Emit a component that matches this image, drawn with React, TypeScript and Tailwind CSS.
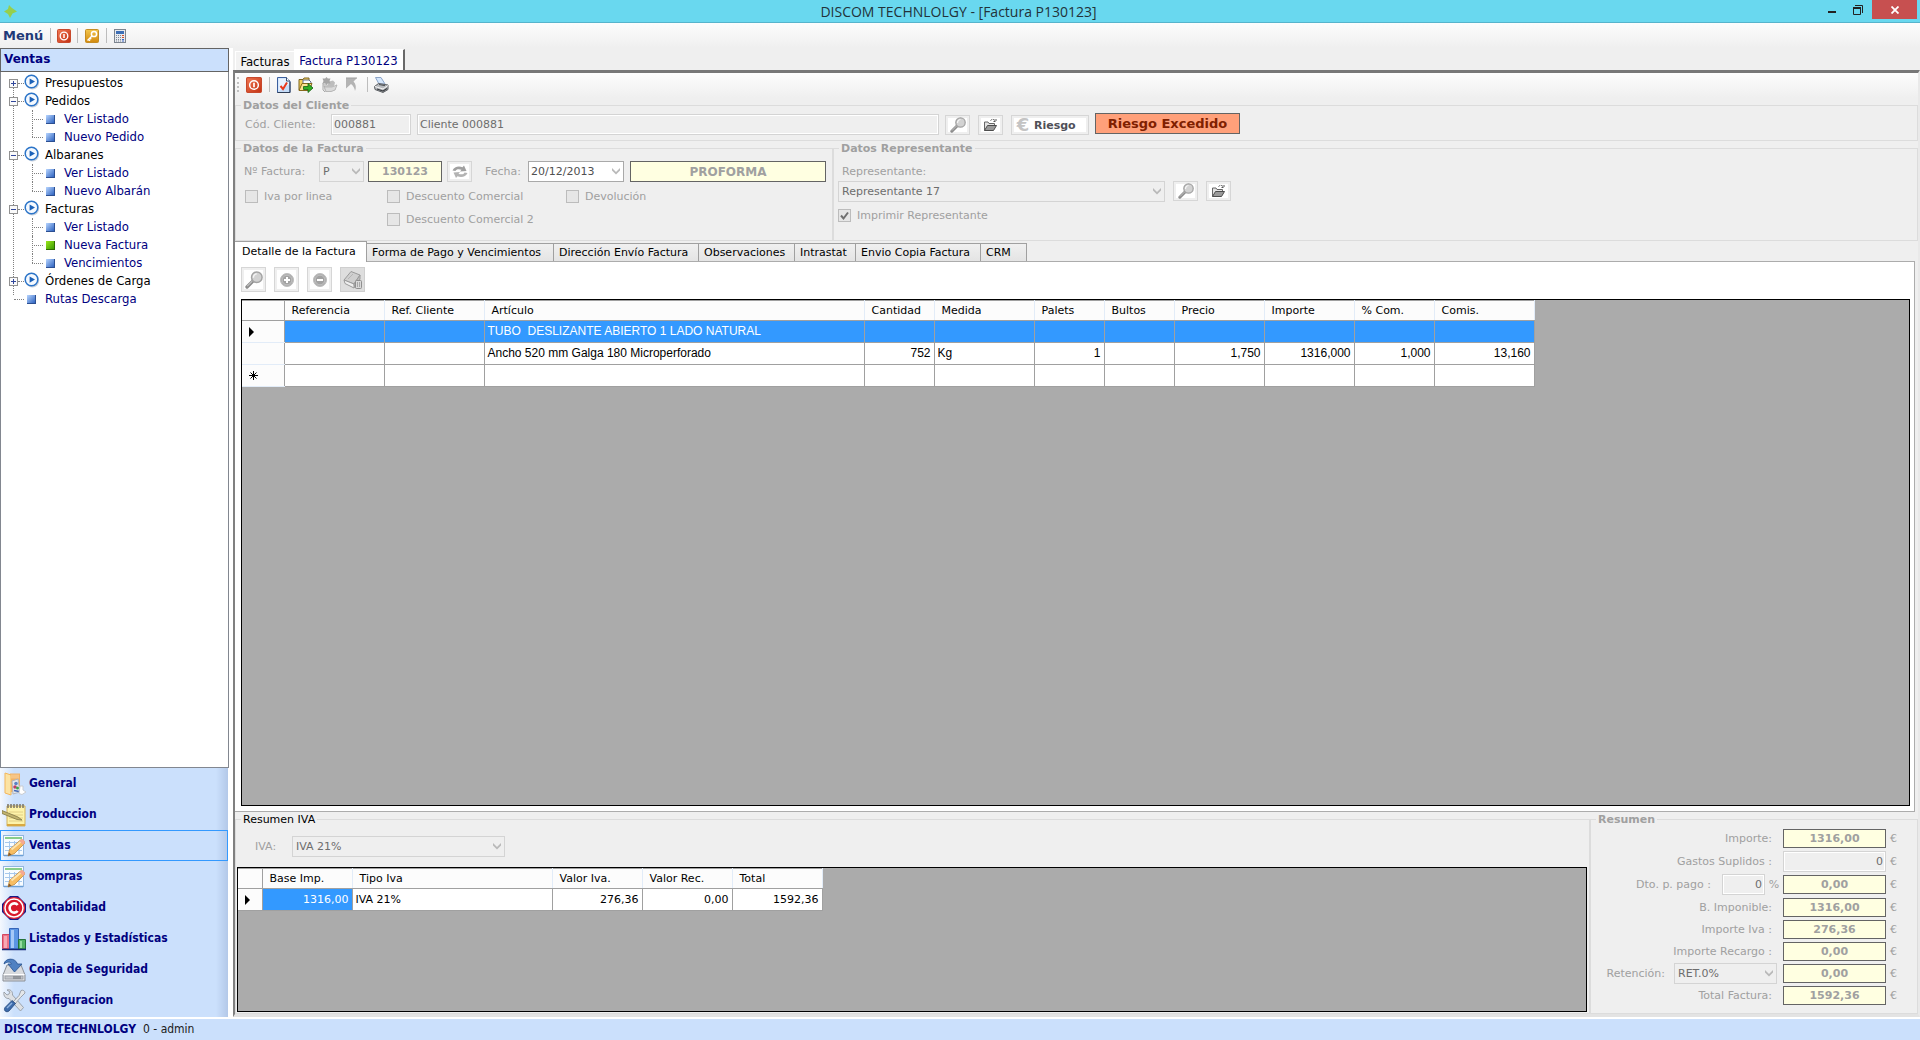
import React from "react";

/* ---------- icons ---------- */

function PowerIcon({ size = 14 }: { size?: number }) {
  return (
    <svg width={size} height={size} viewBox="0 0 14 14" aria-hidden="true">
      <defs>
        <linearGradient id="power" x1="0" y1="0" x2="1" y2="1">
          <stop offset="0" stopColor="#f27a55" />
          <stop offset="1" stopColor="#c22f10" />
        </linearGradient>
      </defs>
      <rect x="0.5" y="0.5" width="13" height="13" rx="1" fill="url(#power)" stroke="#c8492c" />
      <circle cx="7" cy="7" r="3.8" fill="none" stroke="#fff" strokeWidth="1.3" />
      <path d="M7 5v4" stroke="#fff" strokeWidth="1.5" />
    </svg>
  );
}

function KeyIcon() {
  return (
    <svg width="14" height="14" viewBox="0 0 14 14" aria-hidden="true">
      <defs>
        <linearGradient id="key" x1="0" y1="0" x2="0" y2="1">
          <stop offset="0" stopColor="#f3c64d" />
          <stop offset="1" stopColor="#d2890c" />
        </linearGradient>
      </defs>
      <rect x="0.5" y="0.5" width="13" height="13" rx="1" fill="url(#key)" stroke="#c58c22" />
      <circle cx="9" cy="5" r="2.6" fill="none" stroke="#fff" strokeWidth="1.5" />
      <path d="M7.2 6.8L2.5 11.5M3.5 10.5l1.5 1.3M5 9l1.2 1.2" stroke="#fff" strokeWidth="1.4" />
    </svg>
  );
}

function CalculatorIcon() {
  return (
    <svg width="12" height="14" viewBox="0 0 12 14" aria-hidden="true">
      <rect x="0.5" y="0.5" width="11" height="13" fill="#e9ebee" stroke="#7d858f" />
      <rect x="2" y="2" width="8" height="3" fill="#3f6fb5" />
      <path d="M2 6.5h5M2 8.5h5M2 10.5h5M2 12h5" stroke="#7c8797" strokeDasharray="1 1" />
      <path d="M8 6.5h2M8 8.5h2" stroke="#d4502e" />
      <path d="M8 10.5h2M8 12h2" stroke="#3a65c4" />
    </svg>
  );
}

function PlayIcon() {
  return (
    <svg width="16" height="16" viewBox="0 0 16 16" aria-hidden="true">
      <circle cx="8.4" cy="8.6" r="6.8" fill="#c9d2dd" />
      <circle cx="7.5" cy="7.5" r="6.3" fill="#f4f9ff" stroke="#2b74c8" strokeWidth="1.5" />
      <path d="M5.6 4.4L11 7.5l-5.4 3.2z" fill="#1b61b8" />
    </svg>
  );
}

function NodeIcon({ green }: { green?: boolean }) {
  return (
    <svg width="9" height="9" viewBox="0 0 9 9" aria-hidden="true">
      <defs>
        <linearGradient id="nodeBlue" x1="0" y1="0" x2="1" y2="1">
          <stop offset="0" stopColor="#b9d6ff" />
          <stop offset="1" stopColor="#1d55b8" />
        </linearGradient>
        <linearGradient id="nodeGreen" x1="0" y1="0" x2="1" y2="1">
          <stop offset="0" stopColor="#9be61a" />
          <stop offset="1" stopColor="#2f9400" />
        </linearGradient>
      </defs>
      <rect width="9" height="9" fill={green ? "url(#nodeGreen)" : "url(#nodeBlue)"} />
      <path d="M0 8.5h9M8.5 0v9" stroke={green ? "#2f6b00" : "#2c4f91"} />
    </svg>
  );
}

function CheckPageIcon() {
  return (
    <svg width="14" height="16" viewBox="0 0 14 16" aria-hidden="true">
      <path d="M0.5 0.5h9L13 4v11.5H0.5z" fill="#c5ddf9" stroke="#3b5f9e" />
      <path d="M1.5 1.5h7.5v3h3v3L1.5 14z" fill="#e6f1ff" />
      <path d="M9.5 0.5V4H13" fill="#fff" stroke="#3b4f6e" />
      <path d="M0.5 15.5H13V5" fill="none" stroke="#2f3d55" />
      <path d="M3.5 9l2.5 3 4-6.500" fill="none" stroke="#e8391c" strokeWidth="2" />
    </svg>
  );
}

function ExportFolderIcon() {
  return (
    <svg width="16" height="16" viewBox="0 0 16 16" aria-hidden="true">
      <path d="M1 2.500h4l1-1.500h5v3h-2l-5 9H1z" fill="#f3cf5c" stroke="#7d6420" />
      <path d="M5 3h6l2 2v5H5z" fill="#f8fbff" stroke="#66708a" />
      <path d="M1 13.500l3-7h10l-3 7z" fill="#fbe391" stroke="#86691d" />
      <path d="M5.500 9.500h4.500V6.500l5 4.500-5 4.500v-3H5.500z" fill="#2fae23" stroke="#145f12" strokeWidth="0.8" />
    </svg>
  );
}

function GrayFolderIcon() {
  return (
    <svg width="17" height="16" viewBox="0 0 17 16" aria-hidden="true">
      <path d="M2 7h4l1 1.500h6v2L16 7l-1.500 6L10 15H4z" fill="#cacaca" />
      <path d="M3 9l2 5.500h5l4-1.500 2-5-5 2H4z" fill="#dadada" stroke="#ababab" strokeWidth="0.7" />
      <path d="M2 6v7l2 2" fill="none" stroke="#a8a8a8" />
      <path d="M8 4.500l4-1 2 2-1 4H6z" fill="#bdbdbd" />
      <path d="M5.500 0l1.300 1.600L9.500 1.500 8.500 4l1 2.500-2.700-.1L5.500 8 4.200 6.400 1.500 6.500l1-2.500-1-2.500 2.700.1z" fill="#a6a6a6" />
    </svg>
  );
}

function GrayArrowIcon() {
  return (
    <svg width="13" height="15" viewBox="0 0 13 15" aria-hidden="true">
      <path d="M1 1h11L8.500 4.500c2.500 2.500 3 6 1.500 9.500C9.500 11 8.500 9 6 7L1 11.500z" fill="#b4b4b4" />
      <path d="M1 1h11" stroke="#9f9f9f" />
    </svg>
  );
}

function PrinterIcon() {
  return (
    <svg width="15" height="16" viewBox="0 0 15 16" aria-hidden="true">
      <path d="M1.500 0.500h5.500L11 7H5z" fill="#d4e6fb" stroke="#8ba3c6" />
      <path d="M0.500 9.500l4-3 9.500 1.500v4.500L9 15.500l-8-3z" fill="#b7babe" stroke="#5c5f63" />
      <path d="M1 9.500l8 2.500 5-3.500" fill="none" stroke="#f4f4f4" />
      <path d="M3 12l6 2 4-2.500" fill="none" stroke="#3a3d41" strokeWidth="1.3" />
      <path d="M5 7.500l6 1.200" stroke="#4c4f53" />
    </svg>
  );
}

function MagnifierIcon({ size = 16 }: { size?: number }) {
  return (
    <svg width={size} height={size} viewBox="0 0 16 16" aria-hidden="true">
      <path d="M1.800 14.200L7 9" stroke="#8c8c8c" strokeWidth="3" strokeLinecap="round" />
      <path d="M2 13.500L6.500 9" stroke="#c4c4c4" />
      <circle cx="10.500" cy="5.500" r="4.700" fill="#d2d2d2" stroke="#a3a3a3" strokeWidth="1.300" />
      <path d="M7.500 6a3.200 3.200 0 0 1 3-3.500" fill="none" stroke="#f5f5f5" strokeWidth="1.200" />
    </svg>
  );
}

function OpenFolderIcon() {
  return (
    <svg width="15" height="14" viewBox="0 0 15 14" aria-hidden="true">
      <path d="M1.500 12.500V4h3.500l1 1.500h5.500V7" fill="#e2e2e2" stroke="#666" />
      <path d="M1.500 12.500L4.500 7.500h9l-3 5z" fill="#999" stroke="#4c4c4c" />
      <path d="M7.500 2.500c1.500-1.500 3-1.500 4.500 0M10.500 3.500h2.500V1" fill="none" stroke="#555" strokeDasharray="2 1" />
    </svg>
  );
}

function CircleSignIcon({ plus }: { plus?: boolean }) {
  return (
    <svg width="16" height="16" viewBox="0 0 16 16" aria-hidden="true">
      <circle cx="8" cy="8" r="6.500" fill="#adadad" stroke="#bdbdbd" />
      <circle cx="8" cy="8" r="4.800" fill="#a2a2a2" stroke="#cacaca" strokeWidth="0.7" />
      <path d={plus ? "M5 8h6M8 5v6" : "M5 8h6"} stroke="#fff" strokeWidth="2" />
    </svg>
  );
}

function BookIcon() {
  return (
    <svg width="20" height="20" viewBox="0 0 20 20" aria-hidden="true">
      <path d="M1 10L8 1.500l9 3.500-6 9z" fill="#cfcfcf" stroke="#9a9a9a" />
      <path d="M1 10l10 4v4L2 13.500z" fill="#efefef" stroke="#9a9a9a" />
      <path d="M11 14l6-9v4l-5 9z" fill="#bdbdbd" stroke="#9a9a9a" />
      <path d="M5 9l5-5" stroke="#b5b5b5" />
      <rect x="12.500" y="10.500" width="6" height="8" rx="1" fill="#d9d9d9" stroke="#8f8f8f" />
      <path d="M14.500 12v5M16.500 12v5" stroke="#a8a8a8" />
    </svg>
  );
}

function RefreshIcon() {
  return (
    <svg width="18" height="16" viewBox="0 0 18 16" aria-hidden="true">
      <path d="M1.500 6.500C3 2.500 8 1.500 11.500 3.200L13 1.500l2.500 5.500-6.500.5 1.500-1.800C8 4.700 5 5 4.500 7z" fill="#a0a0a0" />
      <path d="M16.500 9c-1.500 4-6.500 5-10 3.300L5 14 2.500 8.500 9 8 7.500 9.800c2.500 1 5.500.7 6-1.300z" fill="#b3b3b3" />
    </svg>
  );
}

function ChevronIcon() {
  return (
    <svg width="8" height="7" viewBox="0 0 8 7" aria-hidden="true">
      <path d="M0 0l4 4 4-4v2.500L4 6.500 0 2.500z" fill="#b9b9b9" />
    </svg>
  );
}

/* ---------- module icons of the navigation bar ---------- */

function GeneralIcon() {
  return (
    <svg width="24" height="24" viewBox="0 0 24 24" aria-hidden="true">
      <path d="M8 1.500h10V20H8z" fill="#f0b268" />
      <path d="M3 1l6 2v20l-6-2z" fill="#fce3a4" stroke="#f3b75c" />
      <path d="M9 2.500h8v4H9z" fill="#f7c586" />
      <path d="M10 9l6-2 2 13-7 2z" fill="#e6e9ee" stroke="#b0b5be" />
      <circle cx="14" cy="11.500" r="1.800" fill="#5b82c4" />
      <circle cx="13" cy="15" r="1.800" fill="#bc3f68" />
      <circle cx="15.500" cy="16" r="1.500" fill="#3ba44a" />
      <path d="M12 18.500l5 1" stroke="#3f66b5" strokeWidth="1.500" />
      <path d="M18 14h3v4l3 2-4 2.500-3-1z" fill="#fff" stroke="#c9ccd1" />
    </svg>
  );
}

function NotepadIcon() {
  return (
    <svg width="24" height="24" viewBox="0 0 24 24" aria-hidden="true">
      <path d="M5 3h18v20H5z" fill="#fdf3a9" stroke="#d3b25d" />
      <path d="M7 9h14M7 12h14M7 15h14M7 18h14" stroke="#e2cf85" />
      <path d="M5 21h18v2H5z" fill="#d9a941" />
      <path d="M6 1v4M9 1v4M12 1v4M15 1v4M18 1v4M21 1v4" stroke="#7a7464" strokeWidth="1.500" />
      <path d="M0 7.500l16 6.500 4 3-5-.5L0 10.500z" fill="#c1b36e" stroke="#827745" strokeWidth="0.800" />
    </svg>
  );
}

function SheetPencilIcon() {
  return (
    <svg width="24" height="24" viewBox="0 0 24 24" aria-hidden="true">
      <rect x="1.500" y="1.500" width="20" height="20" fill="#f8fcff" stroke="#91b6de" />
      <path d="M3 4h17" stroke="#89cd8b" strokeWidth="2" />
      <path d="M3 8.500h17M3 12.500h17M3 16.500h17M7.500 7v13M12.500 7v13M17 7v13" stroke="#a7c8ec" />
      <path d="M2 21.500h19" stroke="#6b9fd6" strokeWidth="1.500" />
      <path d="M6 22l1.500-6.500L18.500 6c2-1 4.500 1 4 3.500L12.500 19.500z" fill="#f7bd62" stroke="#c18a3e" strokeWidth="0.800" />
      <path d="M9.500 15.500L19 7.500" stroke="#fde4ad" strokeWidth="2" />
      <path d="M17.500 7l1.500-1.300c2-1 4.500 1.500 3.500 3.500L21 11z" fill="#f5a893" />
      <path d="M6 22l1-3.500 2.500 2.200z" fill="#7c5732" />
    </svg>
  );
}

function CopyrightIcon() {
  return (
    <svg width="24" height="24" viewBox="0 0 24 24" aria-hidden="true">
      <path d="M8 0h8l8 8v8l-8 8H8l-8-8V8z" fill="#1a1a86" />
      <circle cx="12" cy="12" r="11" fill="#e32636" />
      <circle cx="12" cy="12" r="9" fill="#d8192b" stroke="#fff" strokeWidth="1.500" />
      <path d="M15.700 9a4.600 4.600 0 1 0 0 6" fill="none" stroke="#fff" strokeWidth="2.600" />
    </svg>
  );
}

function BarsIcon() {
  return (
    <svg width="24" height="24" viewBox="0 0 24 24" aria-hidden="true">
      <path d="M0.500 7.500h7v14h-7z" fill="#ee7386" stroke="#d34860" />
      <path d="M2 9h3v12H2z" fill="#f7a9b4" />
      <path d="M7.500 1.500h9V22h-9z" fill="#5b95e4" stroke="#3564b8" />
      <path d="M9 3h3v18H9z" fill="#a5c8f7" />
      <path d="M16.500 12.500h7V22h-7z" fill="#52b266" stroke="#24733a" />
      <path d="M18 14h2v7h-2z" fill="#93da9f" />
      <path d="M0 22.500h24" stroke="#172a78" strokeWidth="1.500" />
    </svg>
  );
}

function BackupIcon() {
  return (
    <svg width="24" height="24" viewBox="0 0 24 24" aria-hidden="true">
      <path d="M5 7h14l4 10v6H1v-6z" fill="#d9dbde" stroke="#8b8f96" />
      <path d="M1.500 16.500h21" stroke="#fff" />
      <path d="M3 18h18v3H3z" fill="#c1c4c9" stroke="#8d9197" strokeWidth="0.600" />
      <path d="M12 18v3M14 18v3M16 18v3M18 18v3" stroke="#6b6f75" />
      <path d="M2 6C3 0 13-1 15.500 6H20l-7.500 8L6 6h3.500C8.500 3.500 5 3.500 2 6z" fill="#4f81c2" stroke="#27528f" strokeWidth="0.800" />
    </svg>
  );
}

function ToolsIcon() {
  return (
    <svg width="24" height="24" viewBox="0 0 24 24" aria-hidden="true">
      <path d="M2 3l3 3 2-1 1-2-3-2c3-1 6 1 5.500 5l11 12.500-3 3.500L7 9.500C4 10 1 7 2 3z" fill="#dde0e4" stroke="#8d939b" strokeWidth="0.800" />
      <path d="M23 4c0-2-2-3.500-4-2.500l-2 5L11 13l2 2 5.500-6.500z" fill="#e4e7ea" stroke="#8c9198" strokeWidth="0.800" />
      <path d="M3 18.500l7-7 3.500 3L7 22c-2.500 2-6-.5-4-3.500z" fill="#3d6bab" stroke="#234577" strokeWidth="0.800" />
      <path d="M5 19l5-5" stroke="#8fb3e0" strokeWidth="1.500" />
    </svg>
  );
}

/* ---------- shared controls ---------- */

function ToolButton({ label, tall, children }: { label: string; tall?: boolean; children: React.ReactNode }) {
  return (
    <button
      type="button"
      aria-label={label}
      className={
        "flex items-center justify-center border border-[#d6d6d6] bg-white shadow-[inset_0_0_0_2px_#efefef] " +
        (tall ? "h-[25px] w-[25px]" : "h-[20px] w-[25px]")
      }
    >
      {children}
    </button>
  );
}

function Drop({ id, label, value, className }: { id: string; label?: string; value: string; className: string }) {
  return (
    <span className={"relative block h-[21px] " + className}>
      <select
        id={id}
        aria-label={label}
        disabled
        className="h-full w-full appearance-none border border-[#d4d4d4] bg-[#efefef] pl-[3px] text-[#6d6d6d] opacity-100"
      >
        <option>{value}</option>
      </select>
      <span className="pointer-events-none absolute top-[7px] right-1">
        <ChevronIcon />
      </span>
    </span>
  );
}

const plainInput = "h-[21px] border border-[#d4d4d4] bg-[#efefef] px-[2px] text-[#6d6d6d] shadow-[inset_0_0_0_1px_#fff]";
const yellowInput = "border border-[#646464] bg-[#ffffe1] text-center font-bold text-[#a0a0a0]";

function Check({ id, label, checked }: { id: string; label: string; checked?: boolean }) {
  return (
    <div className="flex h-[13px] items-center gap-[6px]">
      <span className="relative flex">
        <input
          id={id}
          type="checkbox"
          disabled
          defaultChecked={checked}
          className="h-[13px] w-[13px] appearance-none border border-[#bcbcbc] bg-[#e6e6e6]"
        />
        {checked && (
          <svg className="pointer-events-none absolute top-0 left-0" width="13" height="13" viewBox="0 0 13 13" aria-hidden="true">
            <path d="M3 6.500l2.500 3L10 3.500" fill="none" stroke="#707070" strokeWidth="2" />
          </svg>
        )}
      </span>
      <label htmlFor={id}>{label}</label>
    </div>
  );
}

function Group({ title, className, dark, children }: { title: string; className?: string; dark?: boolean; children: React.ReactNode }) {
  return (
    <fieldset className={"min-w-0 border border-[#dcdcdc] " + (className ?? "")}>
      <legend className={"ml-[5px] h-[15px] px-[2px] leading-[15px] " + (dark ? "text-black" : "font-bold")}>{title}</legend>
      {children}
    </fieldset>
  );
}

/* ---------- navigation tree ---------- */

type Leaf = { label: string; green?: boolean };
type Branch = { label: string; open: boolean; items: Leaf[] };

const branches: Branch[] = [
  { label: "Presupuestos", open: false, items: [] },
  { label: "Pedidos", open: true, items: [{ label: "Ver Listado" }, { label: "Nuevo Pedido" }] },
  { label: "Albaranes", open: true, items: [{ label: "Ver Listado" }, { label: "Nuevo Albarán" }] },
  { label: "Facturas", open: true, items: [{ label: "Ver Listado" }, { label: "Nueva Factura", green: true }, { label: "Vencimientos" }] },
  { label: "Órdenes de Carga", open: false, items: [] },
];

function Tree() {
  return (
    <ul className="flex-1 border border-t-0 border-[#828790] bg-white pt-[2px] font-['DejaVu_Sans_Condensed','DejaVu_Sans',sans-serif] text-[13px] leading-[18px]">
      {branches.map((b) => (
        <li key={b.label} className="relative">
          <span className="absolute top-[14px] bottom-[-5px] left-[12px] border-l border-dotted border-[#808080]" />
          <div className="relative flex h-[18px] items-center pl-2">
            <button
              type="button"
              aria-label={(b.open ? "Contraer " : "Expandir ") + b.label}
              className="flex h-[9px] w-[9px] items-center justify-center border border-[#919191] bg-[#fafafa]"
            >
              <svg width="5" height="5" viewBox="0 0 5 5" aria-hidden="true">
                <path d={b.open ? "M0 2.500h5" : "M0 2.500h5M2.500 0v5"} stroke="#31479b" />
              </svg>
            </button>
            <span className="w-[6px] border-t border-dotted border-[#808080]" />
            <span className="pb-[2px]">
              <PlayIcon />
            </span>
            <span className="pl-[5px] text-black">{b.label}</span>
          </div>
          {b.items.length > 0 && (
            <ul className="ml-[31px]">
              {b.items.map((leaf, i) => (
                <li key={leaf.label} className="relative flex h-[18px] items-center">
                  <span
                    className={
                      "absolute top-0 left-0 border-l border-dotted border-[#808080] " +
                      (i === b.items.length - 1 ? "h-[9px]" : "h-[18px]")
                    }
                  />
                  <span className="mr-[3px] w-[11px] border-t border-dotted border-[#808080]" />
                  <NodeIcon green={leaf.green} />
                  <a href="#" className="pl-[9px] whitespace-nowrap text-[#000080]">
                    {leaf.label}
                  </a>
                </li>
              ))}
            </ul>
          )}
        </li>
      ))}
      <li className="flex h-[18px] items-center pl-[13px]">
        <span className="mr-[3px] w-[10px] border-t border-dotted border-[#808080]" />
        <NodeIcon />
        <a href="#" className="pl-[9px] text-[#000080]">
          Rutas Descarga
        </a>
      </li>
    </ul>
  );
}

const modules = [
  { label: "General", icon: <GeneralIcon /> },
  { label: "Produccion", icon: <NotepadIcon /> },
  { label: "Ventas", icon: <SheetPencilIcon />, active: true },
  { label: "Compras", icon: <SheetPencilIcon /> },
  { label: "Contabilidad", icon: <CopyrightIcon /> },
  { label: "Listados y Estadísticas", icon: <BarsIcon /> },
  { label: "Copia de Seguridad", icon: <BackupIcon /> },
  { label: "Configuracion", icon: <ToolsIcon /> },
];

function Sidebar() {
  return (
    <aside className="flex w-[229px] flex-col">
      <h2 className="h-[24px] border border-[#646464] bg-[#cbe0fc] pl-[3px] text-[12px] leading-[21px] font-bold text-[#000080]">Ventas</h2>
      <Tree />
      <nav className="mr-px bg-[linear-gradient(to_right,#f4f8fe,#cbe0fc_14px,#cbe0fc_216px,#b3c8e8)] pb-px">
        {modules.map((m) => (
          <button
            key={m.label}
            type="button"
            className={
              "flex h-[31px] w-full items-center pl-[1px] text-left font-['DejaVu_Sans_Condensed','DejaVu_Sans',sans-serif] text-[12px] font-bold text-[#000080] " +
              (m.active ? "border border-[#3399ff]" : "border border-transparent")
            }
          >
            {m.icon}
            <span className="pl-[3px]">{m.label}</span>
          </button>
        ))}
      </nav>
    </aside>
  );
}

/* ---------- header areas ---------- */

function TitleBar() {
  return (
    <header className="flex h-[23px] items-start border-b border-[#57b4cc] bg-[#69d8ef]">
      <div className="flex h-full flex-1 items-center">
        <svg className="ml-1" width="13" height="13" viewBox="0 0 13 13" aria-hidden="true">
          <path d="M5 0l3 3 5 3.500-4.500 2L6 13 4 9 0 6.500 4 4z" fill="#96cf4c" />
        </svg>
      </div>
      <h1 className="font-['Open_Sans','Noto_Sans',sans-serif] text-[14px] leading-[23px] text-[#22333a]">
        DISCOM TECHNLOLGY - [Factura P130123]
      </h1>
      <div className="flex flex-1 justify-end pr-[3px]">
        <button type="button" aria-label="Minimizar" className="flex h-[19px] w-[26px] items-center justify-center pt-[5px]">
          <span className="h-[2px] w-2 bg-[#222]" />
        </button>
        <button type="button" aria-label="Restaurar" className="mr-px flex h-[19px] w-[26px] items-center justify-center">
          <svg width="10" height="10" viewBox="0 0 10 10" aria-hidden="true">
            <path d="M2 0.500h7.500V8" fill="none" stroke="#222" />
            <path d="M0.500 2.500h7v7h-7z" fill="none" stroke="#222" />
            <path d="M0 3h8" stroke="#222" strokeWidth="2" />
          </svg>
        </button>
        <button type="button" aria-label="Cerrar" className="flex h-[19px] w-[45px] items-center justify-center bg-[#c75050]">
          <svg width="8" height="8" viewBox="0 0 8 8" aria-hidden="true">
            <path d="M0.500 0.500l7 7M7.500 0.500l-7 7" stroke="#fff" strokeWidth="1.800" />
          </svg>
        </button>
      </div>
    </header>
  );
}

function Divider() {
  return <span className="h-[15px] w-px bg-[#bdbdbd]" />;
}

function MenuBar() {
  return (
    <div className="flex h-[25px] items-center bg-gradient-to-b from-[#fdfdfd] to-[#efefef] pl-[3px]">
      <button type="button" className="w-[47px] text-left text-[13px] font-bold text-[#1f3a78]">
        Menú
      </button>
      <Divider />
      <button type="button" aria-label="Salir" className="mx-[6px]">
        <PowerIcon />
      </button>
      <Divider />
      <button type="button" aria-label="Contraseña" className="mx-[7px]">
        <KeyIcon />
      </button>
      <Divider />
      <button type="button" aria-label="Calculadora" className="mx-[7px]">
        <CalculatorIcon />
      </button>
    </div>
  );
}

function DocumentToolbar() {
  return (
    <div className="flex h-[25px] items-center bg-gradient-to-b from-[#fdfdfd] to-[#efefef] pb-[2px] pl-[2px]">
      <span className="mr-[7px] h-[15px] border-l-2 border-dotted border-[#c0c0c0]" />
      <button type="button" aria-label="Cerrar factura">
        <PowerIcon size={16} />
      </button>
      <span className="mr-[7px] ml-[7px] flex">
        <Divider />
      </span>
      <div className="flex items-center gap-[7px]">
        <button type="button" aria-label="Validar">
          <CheckPageIcon />
        </button>
        <button type="button" aria-label="Exportar">
          <ExportFolderIcon />
        </button>
        <button type="button" aria-label="Nuevo">
          <GrayFolderIcon />
        </button>
        <button type="button" aria-label="Deshacer">
          <GrayArrowIcon />
        </button>
      </div>
      <span className="mr-[6px] ml-[9px] flex">
        <Divider />
      </span>
      <button type="button" aria-label="Imprimir">
        <PrinterIcon />
      </button>
    </div>
  );
}

/* ---------- form groups ---------- */

function ClientGroup() {
  return (
    <Group title="Datos del Cliente" className="h-[43px]">
      <div className="flex items-start">
        <label htmlFor="codCliente" className="mt-[4px] ml-[9px] w-[86px]">
          Cód. Cliente:
        </label>
        <input id="codCliente" readOnly value="000881" className={"mt-px w-[80px] " + plainInput} />
        <input aria-label="Nombre del cliente" readOnly value="Cliente 000881" className={"mt-px ml-[6px] w-[522px] " + plainInput} />
        <div className="mt-[2px] ml-[6px] flex gap-2">
          <ToolButton label="Buscar cliente">
            <MagnifierIcon />
          </ToolButton>
          <ToolButton label="Abrir cliente">
            <OpenFolderIcon />
          </ToolButton>
          <button
            type="button"
            className="flex h-[20px] w-[78px] items-center gap-1 border border-[#d6d6d6] bg-white pl-1 font-bold text-[#505058] shadow-[inset_0_0_0_2px_#efefef]"
          >
            <span className="w-[14px] text-[18px] leading-[18px] text-[#c4c4c4]" aria-hidden="true">
              €
            </span>
            Riesgo
          </button>
        </div>
        <output className="ml-[6px] h-[21px] w-[145px] border border-[#646464] bg-[#ffa07a] text-center text-[13px] leading-[19px] font-bold whitespace-nowrap text-[#802000]">
          Riesgo Excedido
        </output>
      </div>
    </Group>
  );
}

function InvoiceGroup() {
  return (
    <Group title="Datos de la Factura" className="h-[100px] w-[598px]">
      <div className="mt-[5px] flex items-center pl-[8px]">
        <label htmlFor="serie" className="w-[75px]">
          Nº Factura:
        </label>
        <Drop id="serie" value="P" className="w-[45px]" />
        <input aria-label="Número de factura" readOnly value="130123" className={"ml-[4px] h-[21px] w-[74px] " + yellowInput} />
        <button
          type="button"
          aria-label="Actualizar"
          className="mr-[13px] ml-[5px] flex h-[21px] w-[25px] items-center justify-center border border-[#d6d6d6] bg-white shadow-[inset_0_0_0_2px_#efefef]"
        >
          <RefreshIcon />
        </button>
        <label htmlFor="fecha" className="w-[43px]">
          Fecha:
        </label>
        <span className="relative flex">
          <input id="fecha" readOnly value="20/12/2013" className="h-[21px] w-[96px] border border-[#a9a9a9] bg-white px-[2px] text-[#505050]" />
          <button type="button" aria-label="Abrir calendario" className="absolute top-[7px] right-[4px]">
            <ChevronIcon />
          </button>
        </span>
        <input aria-label="Tipo de factura" readOnly value="PROFORMA" className={"ml-[6px] h-[21px] w-[196px] text-[12px] " + yellowInput} />
      </div>
      <div className="mt-2 grid grid-cols-[142px_179px_1fr] gap-y-[10px] pl-[9px]">
        <Check id="ivaLinea" label="Iva por linea" />
        <Check id="dto1" label="Descuento Comercial" />
        <Check id="devolucion" label="Devolución" />
        <span />
        <Check id="dto2" label="Descuento Comercial 2" />
      </div>
    </Group>
  );
}

function AgentGroup() {
  return (
    <Group title="Datos Representante" className="h-[100px] flex-1">
      <div className="pl-[4px]">
        <label htmlFor="representante" className="mt-[8px] ml-[4px] block leading-[15px]">
          Representante:
        </label>
        <div className="mt-[2px] flex gap-[8px]">
          <Drop id="representante" value="Representante 17" className="w-[327px]" />
          <ToolButton label="Buscar representante">
            <MagnifierIcon />
          </ToolButton>
          <ToolButton label="Abrir representante">
            <OpenFolderIcon />
          </ToolButton>
        </div>
        <div className="mt-[7px]">
          <Check id="imprimir" label="Imprimir Representante" checked />
        </div>
      </div>
    </Group>
  );
}

/* ---------- detail tabs and grids ---------- */

const detailTabs = [
  { label: "Forma de Pago y Vencimientos", width: "w-[187px]" },
  { label: "Dirección Envío Factura", width: "w-[145px]" },
  { label: "Observaciones", width: "w-[96px]" },
  { label: "Intrastat", width: "w-[61px]" },
  { label: "Envio Copia Factura", width: "w-[125px]" },
  { label: "CRM", width: "w-[46px]" },
];

function DetailTabs() {
  return (
    <div role="tablist" className="flex items-end text-black">
      <button
        role="tab"
        aria-selected="true"
        type="button"
        className="relative -mb-px h-[21px] w-[132px] border border-b-0 border-l-0 border-[#a0a0a0] bg-white pb-px pl-[7px] text-left whitespace-nowrap"
      >
        Detalle de la Factura
      </button>
      {detailTabs.map((t) => (
        <button
          key={t.label}
          role="tab"
          aria-selected="false"
          type="button"
          className={
            "h-[18px] border-t border-r border-[#a0a0a0] bg-gradient-to-b from-[#f0f0f0] to-[#e4e4e4] pl-[5px] text-left leading-[16px] whitespace-nowrap " +
            t.width
          }
        >
          {t.label}
        </button>
      ))}
    </div>
  );
}

const lineColumns = ["Referencia", "Ref. Cliente", "Artículo", "Cantidad", "Medida", "Palets", "Bultos", "Precio", "Importe", "% Com.", "Comis."];
const lineWidths = [42, 100, 100, 380, 70, 100, 70, 70, 90, 90, 80, 100];
const leftAligned = [2, 4];
const lines: { marker: string; cells: string[]; selected?: boolean }[] = [
  { marker: "arrow", selected: true, cells: ["", "", "TUBO  DESLIZANTE ABIERTO 1 LADO NATURAL", "", "", "", "", "", "", "", ""] },
  { marker: "", cells: ["", "", "Ancho 520 mm Galga 180 Microperforado", "752", "Kg", "1", "", "1,750", "1316,000", "1,000", "13,160"] },
  { marker: "new", cells: ["", "", "", "", "", "", "", "", "", "", ""] },
];

function RowArrow() {
  return (
    <svg className="ml-[7px]" width="6" height="10" viewBox="0 0 6 10" aria-hidden="true">
      <path d="M0 0l5 5-5 5z" fill="#000" />
    </svg>
  );
}

function NewRowMark() {
  return (
    <svg className="ml-[7px]" width="9" height="9" viewBox="0 0 9 9" aria-hidden="true">
      <path d="M4.500 0v9M0 4.500h9M1.500 1.500l6 6M7.500 1.500l-6 6" stroke="#000" />
    </svg>
  );
}

function LinesGrid() {
  return (
    <div className="flex-1 border border-black bg-[#ababab]">
      <table className="table-fixed border-collapse border-t border-[#a0a0a0] text-black" style={{ width: lineWidths.reduce((a, b) => a + b, 0) }}>
        <colgroup>
          {lineWidths.map((w, i) => (
            <col key={i} style={{ width: w }} />
          ))}
        </colgroup>
        <thead>
          <tr className="h-[20px] bg-[#fcfcfc]">
            <th aria-label="Selector" className="border-r border-b border-[#a0a0a0]" />
            {lineColumns.map((c) => (
              <th key={c} className="border-r border-b border-r-[#e2ecf8] border-b-[#a0a0a0] pl-[7px] text-left font-normal whitespace-nowrap">
                {c}
              </th>
            ))}
          </tr>
        </thead>
        <tbody className="font-['Liberation_Sans',Arial,sans-serif] text-[12px]">
          {lines.map((l, r) => (
            <tr key={r} className={"h-[22px] " + (l.selected ? "bg-[#3399ff] text-white" : "bg-white")}>
              <th aria-label={"Fila " + (r + 1)} className="border-r border-b border-r-[#a0a0a0] border-b-[#e2ecf8] bg-[#fcfcfc]">
                {l.marker === "arrow" && <RowArrow />}
                {l.marker === "new" && <NewRowMark />}
              </th>
              {l.cells.map((c, i) => (
                <td key={i} className={"border border-[#a0a0a0] px-[3px] whitespace-pre " + (leftAligned.includes(i) ? "text-left" : "text-right")}>
                  {c}
                </td>
              ))}
            </tr>
          ))}
        </tbody>
      </table>
    </div>
  );
}

const taxWidths = [24, 90, 200, 90, 90, 90];

function TaxGrid() {
  return (
    <div className="flex-1 border border-black bg-[#ababab]">
      <table className="table-fixed border-collapse border-t border-[#a0a0a0] text-black" style={{ width: taxWidths.reduce((a, b) => a + b, 0) }}>
        <colgroup>
          {taxWidths.map((w, i) => (
            <col key={i} style={{ width: w }} />
          ))}
        </colgroup>
        <thead>
          <tr className="h-[20px] bg-[#fcfcfc]">
            <th aria-label="Selector" className="border-r border-b border-[#a0a0a0]" />
            {["Base Imp.", "Tipo Iva", "Valor Iva.", "Valor Rec.", "Total"].map((c) => (
              <th key={c} className="border-r border-b border-r-[#e2ecf8] border-b-[#a0a0a0] pl-[7px] text-left font-normal whitespace-nowrap">
                {c}
              </th>
            ))}
          </tr>
        </thead>
        <tbody>
          <tr className="h-[22px] bg-white">
            <th aria-label="Fila 1" className="border-r border-b border-[#a0a0a0] bg-[#fcfcfc]">
              <RowArrow />
            </th>
            <td className="border border-[#a0a0a0] bg-[#3399ff] px-[3px] text-right text-white">1316,00</td>
            <td className="border border-[#a0a0a0] px-[3px]">IVA 21%</td>
            <td className="border border-[#a0a0a0] px-[3px] text-right">276,36</td>
            <td className="border border-[#a0a0a0] px-[3px] text-right">0,00</td>
            <td className="border border-[#a0a0a0] px-[3px] text-right">1592,36</td>
          </tr>
        </tbody>
      </table>
    </div>
  );
}

/* ---------- totals ---------- */

function TotalRow({ id, label, value, plain, extra }: { id: string; label: string; value: string; plain?: boolean; extra?: React.ReactNode }) {
  return (
    <div className="flex items-center justify-end">
      <label htmlFor={id}>{label}</label>
      {extra ?? <span className="w-[11px]" />}
      <input
        id={id}
        readOnly
        value={value}
        className={plain ? "w-[103px] text-right " + plainInput : "h-[19px] w-[103px] " + yellowInput}
      />
      <span className="w-[31px] pl-1">€</span>
    </div>
  );
}

function TotalsGroup() {
  return (
    <Group title="Resumen" className="w-[328px]">
      <div className="mt-px grid grid-rows-[repeat(4,20px)_repeat(4,19px)] gap-[3px]">
        <TotalRow id="importe" label="Importe:" value="1316,00" />
        <TotalRow id="suplidos" label="Gastos Suplidos :" value="0" plain />
        <TotalRow
          id="prontoPago"
          label="Dto. p. pago :"
          value="0,00"
          extra={
            <>
              <input aria-label="Porcentaje pronto pago" readOnly value="0" className={"ml-[11px] w-[43px] text-right " + plainInput} />
              <span className="w-[18px] text-center">%</span>
            </>
          }
        />
        <TotalRow id="base" label="B. Imponible:" value="1316,00" />
        <TotalRow id="importeIva" label="Importe Iva :" value="276,36" />
        <TotalRow id="recargo" label="Importe Recargo :" value="0,00" />
        <TotalRow
          id="retencionImporte"
          label="Retención:"
          value="0,00"
          extra={
            <span className="mr-[6px] ml-[9px]">
              <Drop id="retencion" label="Tipo de retención" value="RET.0%" className="w-[103px]" />
            </span>
          }
        />
        <TotalRow id="total" label="Total Factura:" value="1592,36" />
      </div>
    </Group>
  );
}

/* ---------- page ---------- */

export default function App() {
  return (
    <div className="flex min-h-screen flex-col bg-white font-['DejaVu_Sans',Verdana,sans-serif] text-[11px] leading-[15px] text-[#a0a0a0]">
      <TitleBar />
      <MenuBar />
      <main className="flex flex-1">
        <Sidebar />
        <section className="ml-[4px] flex min-w-0 flex-1 flex-col bg-[#efefef]">
          <div role="tablist" className="flex h-[22px] items-end pl-[2px] font-['DejaVu_Sans_Condensed','DejaVu_Sans',sans-serif] text-[13px] whitespace-nowrap text-black">
            <button role="tab" aria-selected="false" type="button" className="h-[19px] w-[59px] border-t border-l border-white bg-[#f2f2f2] text-center">
              Facturas
            </button>
            <button role="tab" aria-selected="true" type="button" className="h-[21px] w-[111px] border-t border-r-2 border-t-white border-r-[#696969] bg-white text-center text-[#000080]">
              Factura P130123
            </button>
          </div>
          <div className="flex flex-1 flex-col border-t-3 border-r-2 border-b-3 border-l-2 border-t-[#777] border-r-[#e9e9e9] border-b-[#e3e3e3] border-l-[#808080]">
            <DocumentToolbar />
            <ClientGroup />
            <div className="flex">
              <InvoiceGroup />
              <AgentGroup />
            </div>
            <DetailTabs />
            <div className="mr-[3px] flex flex-1 flex-col border-t border-r border-b border-[#acacac] bg-white pt-[5px] pr-[4px] pb-[5px] pl-[6px]">
              <div className="mb-[7px] flex gap-2">
                <ToolButton label="Buscar línea" tall>
                  <MagnifierIcon size={18} />
                </ToolButton>
                <ToolButton label="Añadir línea" tall>
                  <CircleSignIcon plus />
                </ToolButton>
                <ToolButton label="Quitar línea" tall>
                  <CircleSignIcon />
                </ToolButton>
                <button type="button" aria-label="Tarifas" className="flex h-[25px] w-[25px] items-center justify-center border border-[#cfcfcf] bg-[#dedede]">
                  <BookIcon />
                </button>
              </div>
              <LinesGrid />
            </div>
            <div className="flex h-[202px]">
              <Group title="Resumen IVA" dark className="flex flex-1 flex-col">
                <div className="flex h-full flex-col pb-px pl-px pr-[2px]">
                  <div className="mt-[9px] mb-[10px] flex items-center pl-[18px]">
                    <label htmlFor="iva" className="w-[37px]">
                      IVA:
                    </label>
                    <Drop id="iva" value="IVA 21%" className="w-[213px]" />
                  </div>
                  <TaxGrid />
                </div>
              </Group>
              <TotalsGroup />
            </div>
          </div>
        </section>
      </main>
      <footer className="mt-[2px] flex h-[21px] items-center bg-[#cbe0fc] pl-1 font-['DejaVu_Sans_Condensed','DejaVu_Sans',sans-serif] text-[12px] text-[#202020]">
        <strong className="text-[#000080]">DISCOM TECHNLOLGY</strong>
        <span className="pl-[7px]">0 - admin</span>
      </footer>
    </div>
  );
}
